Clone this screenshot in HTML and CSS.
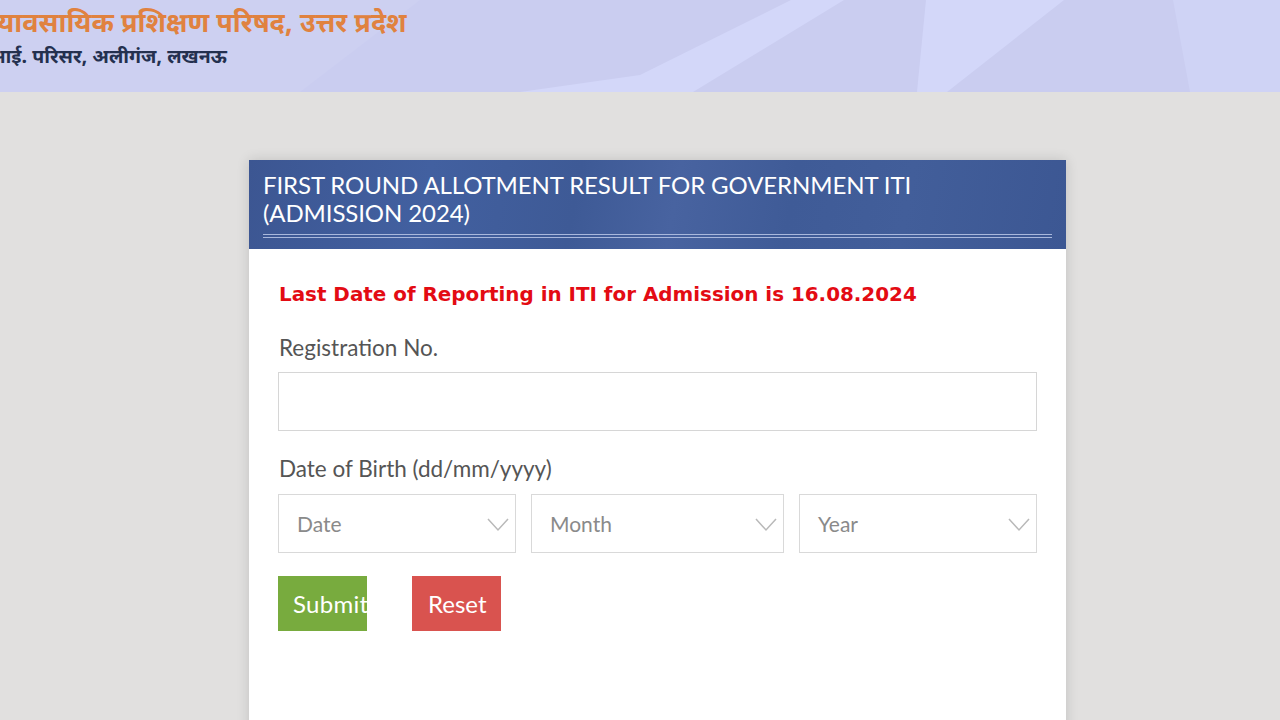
FILE: index.html
```html
<!DOCTYPE html>
<html lang="en">
<head>
<meta charset="utf-8">
<title>First Round Allotment Result</title>
<link rel="stylesheet" href="styles.css">
</head>
<body>
<header class="site-header">
  <svg class="header-bg" width="1280" height="92" viewBox="0 0 1280 92" preserveAspectRatio="none" aria-hidden="true">
    <rect width="1280" height="92" fill="#cacdf0"/>
    <polygon points="0,0 420,0 300,92 0,92" fill="#cdd0f1"/>
    <polygon points="791,0 844,0 693,92 520,92 640,75" fill="#d3d7f9"/>
    <polygon points="926,0 1064,0 947,92 917,92" fill="#d3d7f9"/>
    <polygon points="1173,0 1280,0 1280,92 1190,92" fill="#cfd3f5"/>
  </svg>
  <div class="header-text">
    <div class="org-name"><span class="cut-1">व्यावसायिक प्रशिक्षण परिषद, उत्तर प्रदेश</span></div>
    <div class="org-address"><span class="cut-2">आई. परिसर, अलीगंज, लखनऊ</span></div>
  </div>
</header>

<main class="page">
  <section class="card">
    <div class="card-head">
      <h1 class="card-title">FIRST ROUND ALLOTMENT RESULT FOR GOVERNMENT ITI<br>(ADMISSION 2024)</h1>
      <div class="double-rule"></div>
    </div>
    <div class="card-body">
      <p class="notice">Last Date of Reporting in ITI for Admission is 16.08.2024</p>
      <label class="field-label">Registration No.</label>
      <div class="text-input"></div>
      <label class="field-label dob-label">Date of Birth (dd/mm/yyyy)</label>
      <div class="dob-row">
        <div class="select-box">
          <span class="placeholder">Date</span>
          <svg class="chev" width="22" height="14" viewBox="0 0 22 14"><polyline points="1,1 11,12 21,1" fill="none" stroke="#b9b9b9" stroke-width="1.5"/></svg>
        </div>
        <div class="select-box">
          <span class="placeholder">Month</span>
          <svg class="chev" width="22" height="14" viewBox="0 0 22 14"><polyline points="1,1 11,12 21,1" fill="none" stroke="#b9b9b9" stroke-width="1.5"/></svg>
        </div>
        <div class="select-box">
          <span class="placeholder">Year</span>
          <svg class="chev" width="22" height="14" viewBox="0 0 22 14"><polyline points="1,1 11,12 21,1" fill="none" stroke="#b9b9b9" stroke-width="1.5"/></svg>
        </div>
      </div>
      <div class="actions">
        <button class="btn btn-submit">Submit</button>
        <button class="btn btn-reset">Reset</button>
      </div>
    </div>
  </section>
</main>
</body>
</html>
```

FILE: styles.css
```css
* { box-sizing: border-box; }
html, body { margin: 0; padding: 0; }
body {
  background: #e1e0df;
  font-family: Lato, "Open Sans", sans-serif;
  width: 1280px;
  height: 720px;
  overflow: hidden;
}

.site-header {
  position: relative;
  height: 92px;
  overflow: hidden;
}
.header-bg {
  position: absolute;
  left: 0;
  top: 0;
}
.header-text {
  position: relative;
  padding-top: 8px;
  font-family: "Noto Sans Devanagari", "Lohit Devanagari", "FreeSans", "Noto Sans", sans-serif;
}
.org-name {
  color: #e0823f;
  font-size: 27px;
  font-weight: 700;
  line-height: 36px;
  white-space: nowrap;
}
.org-address {
  color: #24304f;
  font-size: 19.5px;
  font-weight: 700;
  line-height: 26px;
  margin-top: 2px;
  white-space: nowrap;
}
.cut-1 { display: inline-block; margin-left: -12px; }
.cut-2 { display: inline-block; margin-left: -11px; }

.page {
  padding-top: 68px;
  padding-left: 249px;
  display: flex;
}
.card {
  width: 817px;
  background: #ffffff;
  box-shadow: 0 0 12px rgba(0, 0, 0, 0.14);
  min-height: 700px;
}
.card-head {
  background: linear-gradient(100deg, #3c5692 0%, #4260a0 22%, #3e5a96 40%, #4863a0 52%, #3f5b97 66%, #425e9a 80%, #3c5793 100%);
  padding: 11px 14px 11px 14px;
}
.card-title {
  margin: 0;
  color: #ffffff;
  font-family: Lato, sans-serif;
  font-weight: 400;
  font-size: 24px;
  line-height: 28px;
  letter-spacing: -0.1px;
}
.double-rule {
  margin-top: 7px;
  height: 4px;
  border-top: 1px solid #a9b8dc;
  border-bottom: 1px solid #a9b8dc;
}

.card-body {
  padding: 34px 29px 40px 29px;
}
.notice {
  margin: 0 0 0 1px;
  color: #e30b13;
  font-family: "DejaVu Sans", Verdana, sans-serif;
  font-weight: 700;
  font-size: 19.9px;
  line-height: 24px;
}
.field-label {
  display: block;
  margin: 28px 0 0 1px;
  color: #555555;
  font-size: 22.5px;
  line-height: 26px;
}
.dob-label { margin-top: 25px; }
.text-input {
  margin-top: 11px;
  height: 59px;
  border: 1px solid #d6d6d6;
  background: #fff;
}
.dob-row {
  margin-top: 12px;
  display: grid;
  grid-template-columns: 238px 253px 238px;
  column-gap: 15px;
}
.select-box {
  height: 59px;
  border: 1px solid #d9d9d9;
  display: flex;
  align-items: center;
  justify-content: space-between;
  padding: 0 6px 0 18px;
}
.placeholder {
  color: #8a8a8a;
  font-size: 21px;
}
.chev { display: block; margin-top: 2px; }

.actions {
  margin-top: 23px;
  display: flex;
  gap: 45px;
}
.btn {
  width: 89px;
  height: 55px;
  border: 0;
  border-radius: 0;
  color: #ffffff;
  font-family: Lato, sans-serif;
  font-size: 24px;
  text-align: left;
  white-space: nowrap;
  overflow: hidden;
  padding: 0 0 0 15px;
}
.btn-submit { background: #78ab3e; letter-spacing: 0.3px; }
.btn-reset { background: #d9534f; padding-left: 16px; }
```
